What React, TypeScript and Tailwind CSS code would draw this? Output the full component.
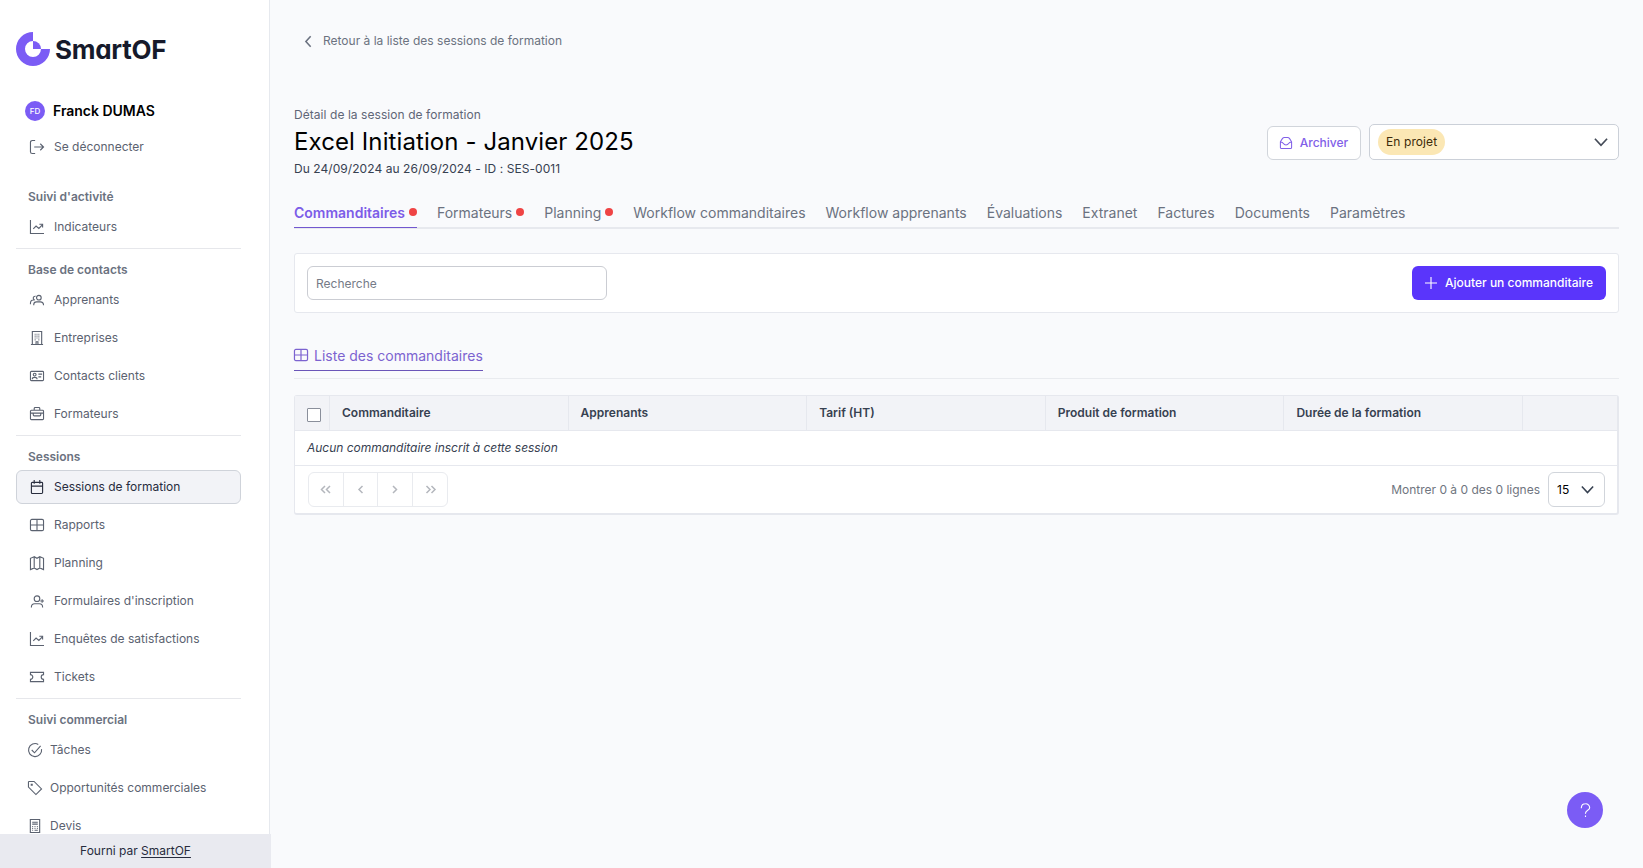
import type { FC, ReactNode } from "react";

const icons: Record<string, ReactNode> = {
  logout: <path d="M5.500.5H2.500a2 2 0 0 0-2 2v10a2 2 0 0 0 2 2h3M4.500 7.500h10M11 4l3.500 3.500L11 11" />,
  chart: <path d="M.5 0v14.500H15M3.500 9.500l3-3 3 2.500 4-4M10 4.500h3.500V8" />,
  users: (
    <path d="M9.500 7.500a2.500 2.500 0 1 1 0-5 2.500 2.500 0 0 1 0 5ZM4 13v-.5c0-2 1.500-3 3-3h4c2 0 3.500 1.500 3.500 3.500M6 3.500a2 2 0 0 0-2.500 2c0 1 .5 1.500 1.500 2H3.500c-2 0-3 1.500-3 3.500v1" />
  ),
  building: (
    <path d="M2.500 14.500V.5h10v14M1 14.500h13M6.500 14.500v-3h2v3M5 3.500h1M7 3.500h1M9 3.500h1M5 5.500h1M7 5.500h1M9 5.500h1M5 7.500h1M7 7.500h1M9 7.500h1M5 9.500h1M9 9.500h1" />
  ),
  id: (
    <path d="M1.500 2.500h12a1 1 0 0 1 1 1v8a1 1 0 0 1-1 1h-12a1 1 0 0 1-1-1v-8a1 1 0 0 1 1-1ZM5 7.500a1.500 1.500 0 1 1 0-3 1.500 1.500 0 0 1 0 3ZM2.500 11v-.5c0-2 5-2 5 0v.5M9 5.500h4M9 8.500h3" />
  ),
  briefcase: (
    <path d="M1.500 3.500h12a1 1 0 0 1 1 1v8a1 1 0 0 1-1 1h-12a1 1 0 0 1-1-1v-8a1 1 0 0 1 1-1ZM4.500 3V1.500a1 1 0 0 1 1-1h4a1 1 0 0 1 1 1V3M.5 6.500h14M3.500 7v1.500a1 1 0 0 0 1 1h6a1 1 0 0 0 1-1V7" />
  ),
  calendar: (
    <path d="M2.500 2.500h10a1 1 0 0 1 1 1v10a1 1 0 0 1-1 1h-10a1 1 0 0 1-1-1v-10a1 1 0 0 1 1-1ZM4.500 0v4M10.500 0v4M1.500 6.500h12" />
  ),
  table: (
    <path d="M2 1.500h11A1.500 1.500 0 0 1 14.500 3v9a1.500 1.500 0 0 1-1.500 1.500H2A1.500 1.500 0 0 1 .5 12V3A1.500 1.500 0 0 1 2 1.500ZM.5 7.500h14M7.500 1.500v12" />
  ),
  map: <path d="m4.500.8-4 1.700v12l4-1.700 3 1.700 3-1.700 4 1.700v-12l-4-1.700-3 1.700-3-1.700ZM4.500 1v12M10.500 1v12" />,
  userPlus: (
    <path d="M7.500 8a3 3 0 1 1 0-6 3 3 0 0 1 0 6ZM1.500 14.500V14c0-2 1.500-3.500 3.500-3.500h5c2 0 3.500 1.500 3.500 3.500v.5M13 5.500v4M11 7.500h4" />
  ),
  ticket: (
    <path d="M.5 2.500h14v2.500c-1.500 0-2.500 1.200-2.500 2.500s1 2.500 2.500 2.500v2.500H.5V10C2 10 3 8.800 3 7.500S2 5 .5 5Z" />
  ),
  check: <path d="M4 7.500 7 10.500 13.500 3M14.500 6.500a7 7 0 1 1-3.500-5" />,
  tag: <path d="M.5 1v5.500l8 8 6-6-8-8H1ZM4.500 4.500h-1v-1h1Z" />,
  quote: (
    <path d="M2.500.5h10v14h-10ZM4.500 3.500h6M4.500 5.500h6M4.500 8h1M7 8h1M9.500 8h1M4.500 10h1M7 10h1M9.500 10h1M4.500 12h1M7 12h3.500" />
  ),
  archive: (
    <path d="M.5 6 3 2Q4 .5 5.500.5h4Q11 .5 12 2l2.500 4v7a1.500 1.500 0 0 1-1.500 1.500H2A1.500 1.500 0 0 1 .5 13ZM.5 6.500h1.500c2 0 2 3.500 5.500 3.500s3.500-3.500 5.500-3.500h1.500" />
  ),
  plus: <path d="M7.500 0v15M0 7.500h15" />,
  left: <path d="M10 1.500 4.500 7.500l5.500 6" />,
  down: <path d="m1 4 6.500 7L14 4" />,
};

interface IconProps {
  name: string;
  className?: string;
}

const Icon: FC<IconProps> = ({ name, className = "size-[14px] stroke-[1.2]" }) => (
  <svg viewBox="0 0 15 15" fill="none" stroke="currentColor" className={`shrink-0 overflow-visible ${className}`}>
    {icons[name]}
  </svg>
);

interface Section {
  title: string;
  tight?: boolean;
  items: { label: string; icon: string; active?: boolean }[];
}

const sections: Section[] = [
  { title: "Suivi d'activité", items: [{ label: "Indicateurs", icon: "chart" }] },
  {
    title: "Base de contacts",
    items: [
      { label: "Apprenants", icon: "users" },
      { label: "Entreprises", icon: "building" },
      { label: "Contacts clients", icon: "id" },
      { label: "Formateurs", icon: "briefcase" },
    ],
  },
  {
    title: "Sessions",
    items: [
      { label: "Sessions de formation", icon: "calendar", active: true },
      { label: "Rapports", icon: "table" },
      { label: "Planning", icon: "map" },
      { label: "Formulaires d'inscription", icon: "userPlus" },
      { label: "Enquêtes de satisfactions", icon: "chart" },
      { label: "Tickets", icon: "ticket" },
    ],
  },
  {
    title: "Suivi commercial",
    tight: true,
    items: [
      { label: "Tâches", icon: "check" },
      { label: "Opportunités commerciales", icon: "tag" },
      { label: "Devis", icon: "quote" },
    ],
  },
];

const tabs = [
  { label: "Commanditaires", dot: true, active: true },
  { label: "Formateurs", dot: true },
  { label: "Planning", dot: true },
  { label: "Workflow commanditaires" },
  { label: "Workflow apprenants" },
  { label: "Évaluations" },
  { label: "Extranet" },
  { label: "Factures" },
  { label: "Documents" },
  { label: "Paramètres" },
];

const columns = ["Commanditaire", "Apprenants", "Tarif (HT)", "Produit de formation", "Durée de la formation"];

const pagerPaths = [
  "M7 4 3.500 7.500l3.500 3.500M12 4 8.500 7.500l3.500 3.500",
  "M9.500 4 6 7.500l3.500 3.500",
  "M6 4l3.500 3.500L6 11",
  "M3.500 4 7 7.500 3.500 11M8.500 4l3.500 3.500L8.500 11",
];

const Logo: FC = () => (
  <svg width="152" height="36" viewBox="0 0 152 36" className="block">
    <path d="M17 1v9a8 8 0 1 0 8 8h9A17 17 0 1 1 17 1Z" fill="#7b5cf5" />
    <path d="M17 10a8 8 0 0 1 8 8h-8Z" fill="#7b5cf5" />
    <text
      x="39"
      y="27.500"
      textLength="111.500"
      fontSize="26"
      fontWeight="650"
      fill="#161a2b"
      className="[font-feature-settings:'cv11']"
    >
      SmartOF
    </text>
  </svg>
);

const Sidebar: FC = () => (
  <aside className="flex h-full w-[270px] shrink-0 flex-col border-r border-[#e6e9ee] bg-white">
    <div className="min-h-0 flex-1 overflow-hidden pl-4 pr-7 pt-[31px]">
      <Logo />
      <div className="mt-[34px] flex h-5 items-center gap-2 pl-[9px]">
        <div className="flex size-5 items-center justify-center rounded-full bg-[#7b5cf5] text-[8px] font-medium text-white">
          FD
        </div>
        <span className="text-[14px] font-semibold tracking-[-0.002em] text-black">Franck DUMAS</span>
      </div>
      <div className="mt-[9px] mb-3 flex h-[34px] items-center gap-[10px] pl-[14px]">
        <Icon name="logout" />
        <span>Se déconnecter</span>
      </div>
      {sections.map((section) => (
        <div key={section.title} className="border-b border-[#e6e7eb]">
          <div className="flex h-[34px] items-center pt-2 pl-3 font-semibold text-[#6b7280]">{section.title}</div>
          {section.items.map((item) => (
            <div
              key={item.label}
              className={`mb-1 flex h-[34px] items-center rounded-md border ${
                section.tight ? "gap-2 pl-[11px]" : "gap-[10px] pl-[13px]"
              } ${item.active ? "border-[#cfd3da] bg-[#f2f3f7] text-[#272c3d]" : "border-transparent"}`}
            >
              <Icon name={item.icon} />
              <span>{item.label}</span>
            </div>
          ))}
        </div>
      ))}
    </div>
    <div className="-mr-0.5 flex h-[34px] shrink-0 items-center justify-center bg-[#e9eaf0] text-[#272c3d]">
      <span>
        Fourni par <span className="underline underline-offset-2">SmartOF</span>
      </span>
    </div>
  </aside>
);

const PageHeader: FC = () => (
  <header>
    <div className="flex h-[22px] items-center gap-2 pl-2 text-[#6b7280]">
      <Icon name="left" className="size-[13px] stroke-[1.8]" />
      <span>Retour à la liste des sessions de formation</span>
    </div>
    <div className="mt-[54px] flex justify-between">
      <div>
        <p className="h-[18px] leading-[18px] tracking-[0.005em] text-[#5f6677]">Détail de la session de formation</p>
        <h1 className="h-[35px] text-[24px] leading-[36px] tracking-[0.004em] text-black">
          Excel Initiation - Janvier 2025
        </h1>
        <p className="h-5 leading-5 tracking-[0.005em] text-[#374151]">Du 24/09/2024 au 26/09/2024 - ID : SES-0011</p>
      </div>
      <div className="mt-[18px] flex h-9 items-end gap-2">
        <button className="flex h-[34px] w-[94px] items-center justify-center gap-2 rounded-md border border-[#d1d5db] bg-white font-medium text-[#8160e8]">
          <Icon name="archive" className="size-3 stroke-[1.3]" />
          Archiver
        </button>
        <div className="flex h-9 w-[250px] items-center justify-between rounded-[5px] border border-[#cbd0d8] bg-white pl-2 pr-[10px]">
          <span className="flex h-[26px] items-center rounded-full bg-[#fbe7b4] px-2 tracking-[0.008em] text-[#3b2a0a]">
            En projet
          </span>
          <Icon name="down" className="size-[14px] stroke-[1.8] text-[#444b57]" />
        </div>
      </div>
    </div>
    <nav className="mt-[20px] flex h-[30px] gap-5 border-b-2 border-[#e7e9ee] text-[14px] tracking-normal text-[#6b7280]">
      {tabs.map((tab) => (
        <div
          key={tab.label}
          className={`flex h-[29px] items-center gap-1 pb-px ${
            tab.active ? "border-b border-[#7257cf] font-semibold text-[#7c5ce8]" : ""
          }`}
        >
          {tab.label}
          {tab.dot && <span className="mb-0.5 size-2 rounded-full bg-[#ef4444]" />}
        </div>
      ))}
    </nav>
  </header>
);

const Table: FC = () => (
  <div className="mt-4 h-[120px] rounded-[3px] border border-r-2 border-b-2 border-[#e6e8ee] bg-white">
    <div className="flex h-[35px] border-b border-[#e6e8ee] bg-[#f2f3f7] font-semibold text-[#374151]">
      <div className="flex w-[35px] items-center border-r border-[#e6e8ee] pt-1 pl-3">
        <span className="size-[14px] rounded-[1px] border border-[#8a8f9b] bg-white" />
      </div>
      {columns.map((column) => (
        <div key={column} className="flex w-[238.600px] items-center border-r border-[#e6e8ee] pl-3">
          {column}
        </div>
      ))}
    </div>
    <div className="flex h-[35px] items-center border-b border-[#e6e8ee] pl-3 tracking-[-0.002em] text-[#374151] italic">
      Aucun commanditaire inscrit à cette session
    </div>
    <div className="flex h-[47px] items-center justify-between pl-[13px] pr-3">
      <div className="flex h-[35px] divide-x divide-[#e9ebef] rounded-md border border-[#e9ebef] text-[#b4b7bd]">
        {pagerPaths.map((d) => (
          <div key={d} className="flex w-[34.600px] items-center justify-center">
            <svg viewBox="0 0 15 15" fill="none" stroke="currentColor" strokeWidth="1.500" className="size-[15px]">
              <path d={d} />
            </svg>
          </div>
        ))}
      </div>
      <div className="flex items-center gap-2 text-[#6f7580]">
        Montrer 0 à 0 des 0 lignes
        <div className="flex h-[35px] w-[57px] items-center justify-between rounded-md border border-[#d1d5db] pl-2 pr-[10px] text-black">
          15
          <Icon name="down" className="size-[13px] stroke-[1.8] text-[#374151]" />
        </div>
      </div>
    </div>
  </div>
);

const App: FC = () => (
  <div className="flex h-screen overflow-hidden bg-[#f9fafc] font-[Inter,sans-serif] text-[12px] leading-4 tracking-normal text-[#5b6270]">
    <Sidebar />
    <main className="min-w-0 flex-1 pl-6 pr-6 pt-[30px]">
      <PageHeader />
      <div className="mt-6 flex h-[60px] items-center justify-between rounded-[3px] border border-[#e6e8ee] bg-white px-3">
        <input
          placeholder="Recherche"
          className="h-[34px] w-[300px] rounded-md border border-[#cbcdd3] bg-white px-2 placeholder:text-[#757b87]"
        />
        <button className="flex h-[34px] w-[194px] items-center justify-center gap-2 rounded-md bg-[#5a35fb] font-medium text-white">
          <Icon name="plus" className="size-3 stroke-[1.4]" />
          Ajouter un commanditaire
        </button>
      </div>
      <div className="mt-[30px] h-[36px] border-b border-[#e9ebef] text-[14px] text-[#7c63d0]">
        <div className="inline-flex h-[28px] items-center gap-[6px] border-b border-[#6a55b8] pb-0.5">
          <Icon name="table" className="mb-0.5 size-[14px] stroke-[1.3]" />
          Liste des commanditaires
        </div>
      </div>
      <Table />
    </main>
    <div className="absolute right-10 bottom-10 flex size-9 items-center justify-center rounded-full bg-[#7b5cf5] text-white">
      <svg width="13" height="15" viewBox="0 0 14 16" fill="none" stroke="currentColor" strokeWidth="1.200">
        <path d="M2.500 5.500V5A4.500 4.500 0 0 1 7 .800 4.300 4.300 0 0 1 11.500 5C11.500 8 7 7.500 7 11v.5M7 13.500v1.500" />
      </svg>
    </div>
  </div>
);

export default App;
